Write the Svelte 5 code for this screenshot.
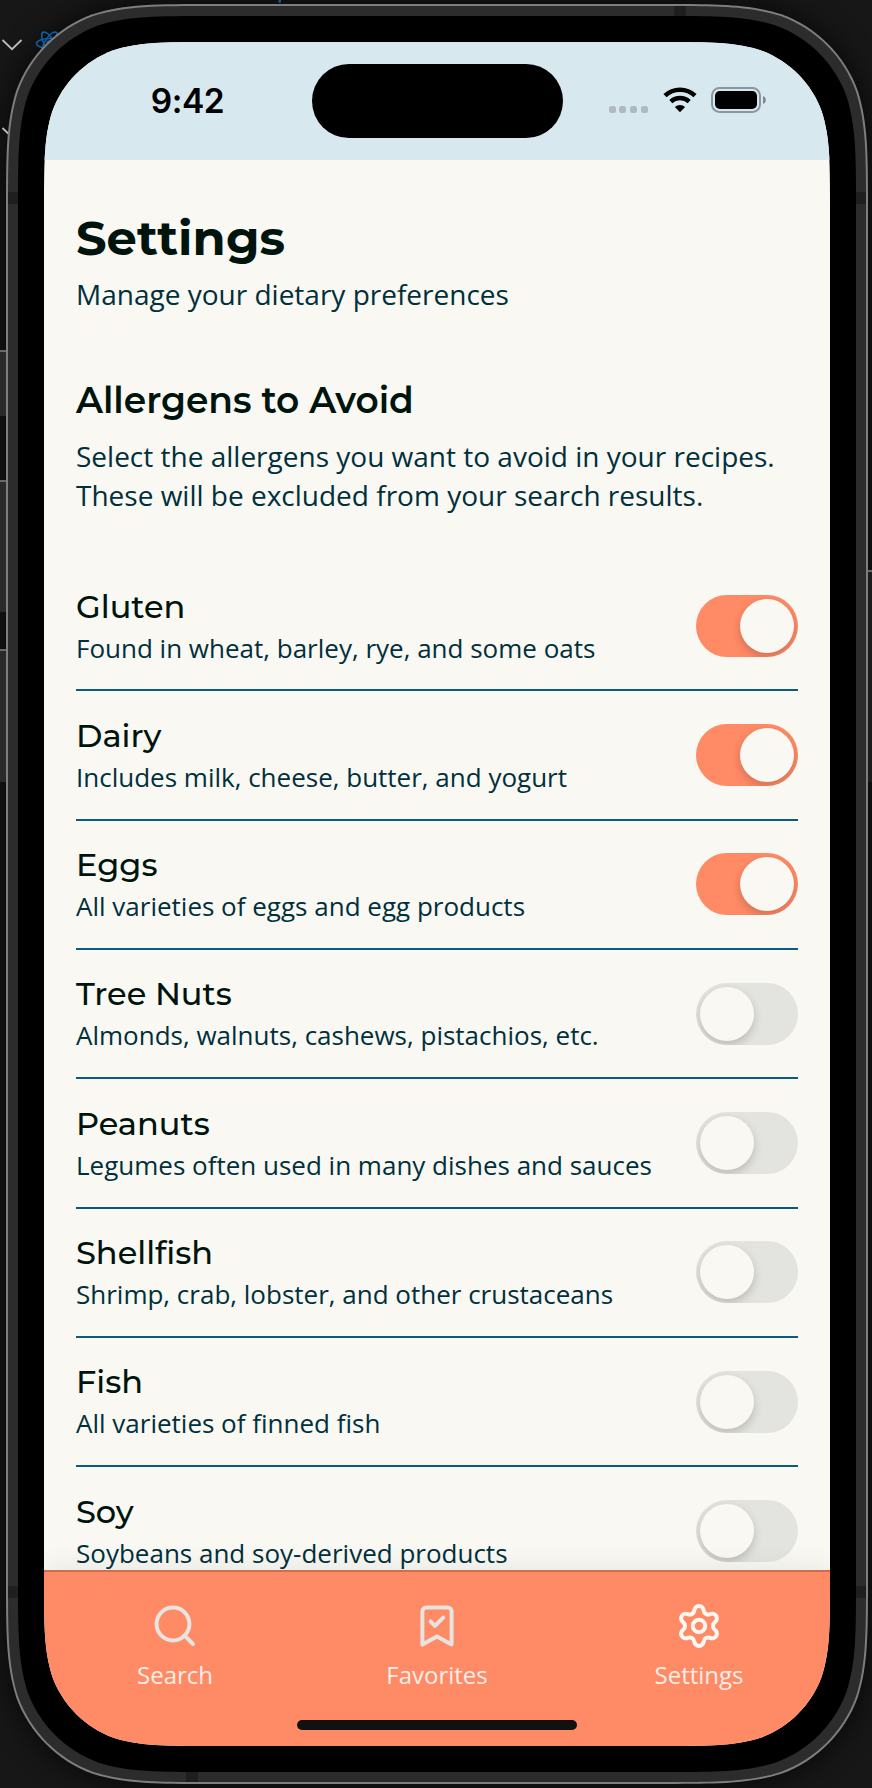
<script>
  const allergens = $state([
    { name: 'Gluten', note: 'Found in wheat, barley, rye, and some oats', on: true },
    { name: 'Dairy', note: 'Includes milk, cheese, butter, and yogurt', on: true },
    { name: 'Eggs', note: 'All varieties of eggs and egg products', on: true },
    { name: 'Tree Nuts', note: 'Almonds, walnuts, cashews, pistachios, etc.', on: false },
    { name: 'Peanuts', note: 'Legumes often used in many dishes and sauces', on: false },
    { name: 'Shellfish', note: 'Shrimp, crab, lobster, and other crustaceans', on: false },
    { name: 'Fish', note: 'All varieties of finned fish', on: false },
    { name: 'Soy', note: 'Soybeans and soy-derived products', on: false }
  ]);

  // Rounded rectangle with continuous-curvature corners
  function squircle(x, y, w, h, r) {
    const a = 1.52866 * r, b = 1.08849 * r, c = 0.86841 * r, d = 0.63149 * r;
    const e = 0.07491 * r, f = 0.37282 * r, g = 0.16906 * r;
    const X = x + w, Y = y + h;
    return `M${x + a} ${y}L${X - a} ${y}C${X - b} ${y} ${X - c} ${y} ${X - d} ${y + e}C${X - f} ${y + g} ${X - g} ${y + f} ${X - e} ${y + d}C${X} ${y + c} ${X} ${y + b} ${X} ${y + a}L${X} ${Y - a}C${X} ${Y - b} ${X} ${Y - c} ${X - e} ${Y - d}C${X - g} ${Y - f} ${X - f} ${Y - g} ${X - d} ${Y - e}C${X - c} ${Y} ${X - b} ${Y} ${X - a} ${Y}L${x + a} ${Y}C${x + b} ${Y} ${x + c} ${Y} ${x + d} ${Y - e}C${x + f} ${Y - g} ${x + g} ${Y - f} ${x + e} ${Y - d}C${x} ${Y - c} ${x} ${Y - b} ${x} ${Y - a}L${x} ${y + a}C${x} ${y + b} ${x} ${y + c} ${x + e} ${y + d}C${x + g} ${y + f} ${x + f} ${y + g} ${x + d} ${y + e}C${x + c} ${y} ${x + b} ${y} ${x + a} ${y}Z`;
  }
  const rim = squircle(6, 4, 862, 1780, 137);
  const metal = squircle(8, 6, 858, 1776, 135);
  const bezel = squircle(18, 16, 838, 1756, 127);
  const screenClip = squircle(0, 0, 786, 1704, 110);
</script>

<div class="stage">
  <svg class="frame" width="872" height="1788" viewBox="0 0 872 1788" aria-hidden="true">
    <defs>
      <clipPath id="metal"><path d={metal} /></clipPath>
      <filter id="soft" x="-10%" y="-10%" width="120%" height="120%"><feGaussianBlur stdDeviation="16" /></filter>
    </defs>
    <rect width="872" height="1788" fill="#171717" />
    <path d={rim} fill="#000" opacity=".75" filter="url(#soft)" />
    <g fill="#2a2a2a">
      <rect y="350" width="8" height="66" /><rect y="480" width="8" height="132" /><rect y="649" width="8" height="133" />
      <rect x="866" y="570" width="6" height="212" fill="#1c1c1c" />
    </g>
    <g fill="#696969">
      <rect y="350" width="8" height="2" /><rect y="480" width="8" height="2" /><rect y="649" width="8" height="2" />
      <rect x="866" y="570" width="6" height="2" />
    </g>
    <g fill="none" stroke="#bcbcbc" stroke-width="1.8">
      <path d="M2.5 40 12 49.2 21.5 40" /><path d="M2.5 128 12 137.2 21.5 128" />
    </g>
    <g fill="none" stroke="#0d60aa" stroke-width="1.5">
      <ellipse cx="49.5" cy="43.5" rx="13" ry="5" />
      <ellipse cx="49.5" cy="43.5" rx="13" ry="5" transform="rotate(60 49.5 43.5)" />
      <ellipse cx="49.5" cy="43.5" rx="13" ry="5" transform="rotate(120 49.5 43.5)" />
      <circle cx="49.5" cy="43.5" r="2.5" fill="#0d60aa" />
    </g>
    <rect x="278.5" width="2.5" height="2.5" fill="#1b5c8e" />
    <path d={rim} fill="#7e7e7e" />
    <path d={metal} fill="#2c2c2c" />
    <g fill="#1f1f1f" clip-path="url(#metal)">
      <rect x="674" y="6" width="12" height="12" /><rect x="186" y="1770" width="12" height="12" />
      <rect x="8" y="192" width="12" height="12" /><rect x="854" y="192" width="12" height="12" />
      <rect x="8" y="1586" width="12" height="12" /><rect x="854" y="1586" width="12" height="12" />
    </g>
    <path d={bezel} fill="#000" />
  </svg>

  <div class="screen" style:clip-path={`path('${screenClip}')`}>
    <header class="status">
      <span class="time">9:42</span>
      <div class="island"></div>
      <div class="signals">
        <div class="dots"><i></i><i></i><i></i><i></i></div>
        <svg class="wifi" width="34" height="26" viewBox="0 0 34 26">
          <path d="M2 8.7A21.8 21.8 0 0 1 32 8.7" fill="none" stroke="#000" stroke-width="4.6" />
          <path d="M7.8 14.6A13.6 13.6 0 0 1 26.2 14.6" fill="none" stroke="#000" stroke-width="4.4" />
          <path d="M17 25.2 11.9 20A7.5 7.5 0 0 1 22.1 20Z" />
        </svg>
        <svg class="battery" width="56" height="26" viewBox="0 0 56 26">
          <rect x="1" y="1" width="48" height="24" rx="7.5" fill="none" stroke="#8b979e" stroke-width="2" />
          <rect x="4" y="4" width="42" height="18" rx="4.8" />
          <path d="M52 9C55.8 10.2 55.8 15.8 52 17Z" fill="#7e898f" />
        </svg>
      </div>
    </header>

    <main>
      <h1>Settings</h1>
      <p class="lead">Manage your dietary preferences</p>
      <h2>Allergens to Avoid</h2>
      <p class="intro">Select the allergens you want to avoid in your recipes.<br />These will be excluded from your search results.</p>
      <ul>
        {#each allergens as a}
          <li>
            <div class="copy">
              <h3>{a.name}</h3>
              <p>{a.note}</p>
            </div>
            <button class="toggle" class:on={a.on} role="switch" aria-checked={a.on} aria-label={a.name} onclick={() => (a.on = !a.on)}><i></i></button>
          </li>
        {/each}
      </ul>
    </main>

    <nav>
      <div class="tab">
        <svg viewBox="0 0 24 24"><circle cx="11" cy="11" r="8.2" /><path d="m21 21-4.3-4.3" /></svg>
        <span>Search</span>
      </div>
      <div class="tab">
        <svg viewBox="0 0 24 24"><path d="m19.3 21.3-7.3-4.1-7.3 4.1V4.8a2 2 0 0 1 2-2h10.6a2 2 0 0 1 2 2z" /><path d="m8.8 9.7 2.2 2.2 4.1-4.1" /></svg>
        <span>Favorites</span>
      </div>
      <div class="tab active">
        <svg viewBox="0 0 24 24"><path d="M9.671 4.136a2.34 2.34 0 0 1 4.659 0 2.34 2.34 0 0 0 3.319 1.915 2.34 2.34 0 0 1 2.33 4.033 2.34 2.34 0 0 0 0 3.831 2.34 2.34 0 0 1-2.33 4.033 2.34 2.34 0 0 0-3.319 1.915 2.34 2.34 0 0 1-4.659 0 2.34 2.34 0 0 0-3.32-1.915 2.34 2.34 0 0 1-2.33-4.033 2.34 2.34 0 0 0 0-3.831A2.34 2.34 0 0 1 6.35 6.051a2.34 2.34 0 0 0 3.319-1.915" /><circle cx="12" cy="12" r="3.1" /></svg>
        <span>Settings</span>
      </div>
      <div class="home"></div>
    </nav>
  </div>
</div>

<style>
  :global(body) { background: #111; overflow: hidden; }
  .stage { position: relative; box-sizing: border-box; width: 872px; height: 1788px; padding: 42px 42px 42px 44px; overflow: hidden; }
  .frame { position: absolute; inset: 0; }
  .screen { position: relative; display: flex; flex-direction: column; width: 786px; height: 1704px; background: #f9f8f3; font-family: "Open Sans", sans-serif; }

  .status { flex: none; box-sizing: border-box; display: grid; grid-template-columns: 268px 250.5px 1fr; align-items: start; height: 118px; padding-top: 22.3px; background: #d8e8ef; }
  .time { padding: 16.7px 0 0 19px; text-align: center; font: 600 33.5px/40px Inter, sans-serif; letter-spacing: -0.5px; color: #000; }
  .island { height: 73.6px; border-radius: 37px; background: #000; }
  .signals { display: flex; align-items: flex-start; padding: 23px 0 0 46px; }
  .dots { display: flex; gap: 3.7px; padding-top: 19px; width: 54px; box-sizing: border-box; }
  .dots i { width: 7px; height: 7px; border-radius: 2.5px; background: #aebac1; }
  .wifi { margin-right: 14px; }

  main { flex: 1; min-height: 0; overflow: hidden; padding: 48.5px 32px 0; }
  h1, h2, h3, p, ul { margin: 0; padding: 0; }
  h1, h2, h3 { font-family: Montserrat, Inter, sans-serif; color: #00140e; white-space: nowrap; }
  h1 { font-size: 48px; line-height: 58px; font-weight: 700; }
  h2 { margin-top: 64.5px; font-size: 36px; line-height: 44px; font-weight: 600; }
  h3 { font-size: 32px; line-height: 39px; font-weight: 500; }
  p { color: #00303b; white-space: nowrap; }
  .lead { margin-top: 8px; font-size: 28px; line-height: 39px; }
  .intro { margin-top: 14.6px; font-size: 28px; line-height: 39.2px; }
  ul { list-style: none; margin-top: 47px; }
  li { display: flex; align-items: center; justify-content: space-between; box-sizing: border-box; height: 129.33px; padding: 24px 0; border-bottom: 2px solid #0a5b7d; }
  .copy { padding-top: 1px; }
  .copy p { margin-top: 4px; font-size: 26px; line-height: 36.33px; }
  .toggle { box-sizing: border-box; width: 102px; height: 62px; padding: 4px; border: 0; border-radius: 31px; background: #e3e4df; overflow: hidden; display: flex; }
  .toggle.on { background: #ff8a66; justify-content: flex-end; }
  .toggle i { width: 54px; height: 54px; border-radius: 50%; background: #f9f8f3; box-shadow: 0 4px 10px rgba(0, 0, 0, .18); }

  nav { position: relative; flex: none; box-sizing: border-box; display: grid; grid-template-columns: repeat(3, 1fr); align-items: start; height: 176px; padding-top: 30px; border-top: 2px solid #cc6e52; background: #ff8a66; box-shadow: 0 -4px 24px rgba(0, 0, 0, .07); }
  .tab { display: flex; flex-direction: column; align-items: center; color: #fdeee7; font-size: 24px; line-height: 32px; }
  .tab svg { width: 48px; height: 48px; fill: none; stroke: #e5e4de; stroke-width: 2; stroke-linecap: round; stroke-linejoin: round; }
  .tab span { margin-top: 9px; }
  .active svg { stroke: #f9f8f3; }
  .home { position: absolute; left: 253px; bottom: 16px; width: 280px; height: 10px; border-radius: 5px; background: #111; }
</style>
